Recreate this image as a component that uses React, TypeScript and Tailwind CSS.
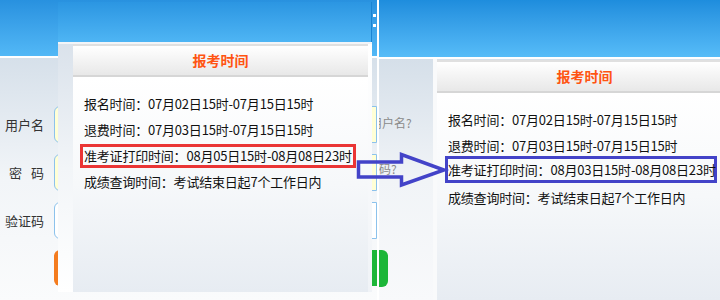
const rows = [
  "报名时间：07月02日15时-07月15日15时",
  "退费时间：07月03日15时-07月15日15时",
];

interface PanelProps {
  printTime: string;
  boxClass: string;
}

function SchedulePanel({ printTime, boxClass }: PanelProps) {
  return (
    <div className="flex h-full w-[295px] shrink-0 flex-col">
      {/* header */}
      <div className="flex h-[33px] shrink-0 items-center justify-center border-t-2 border-b-2 border-t-[#e0e0e0] border-b-[#d6d6d6] bg-gradient-to-b from-white to-[#e8e8e8]">
        <span className="text-[14px] font-bold text-[#ff5412]">报考时间</span>
      </div>
      {/* body */}
      <div className="flex flex-1 flex-col bg-gradient-to-b from-white via-[#f6f8fa] to-[#e7ecf2] pl-[11px] pt-[14px] text-[13px] tracking-[-0.2px] text-[#111]">
        {rows.map((r) => (
          <div key={r} className="flex h-[26px] items-center whitespace-nowrap">
            {r}
          </div>
        ))}
        <div className={`flex items-center whitespace-nowrap border-[3px] ${boxClass}`}>
          准考证打印时间：{printTime}
        </div>
        <div className="flex h-[26px] items-center whitespace-nowrap">
          成绩查询时间：考试结束日起7个工作日内
        </div>
      </div>
    </div>
  );
}

function LoginRow({ label, yellow }: { label: React.ReactNode; yellow: boolean }) {
  return (
    <div className="mb-[11px] flex h-[37px] items-center">
      <div className="w-[44px] text-right text-[13px] text-[#333]">{label}</div>
      <div
        className={`ml-[10px] h-[37px] w-[323px] rounded-l-[6px] border border-[#8cc2ec] ${
          yellow ? "bg-[#ffffd6]" : "bg-white"
        }`}
      />
    </div>
  );
}

export default function App() {
  return (
    <div className="relative h-[300px] w-[720px] overflow-hidden bg-white font-['Noto_Sans_CJK_SC',sans-serif]">
      {/* underlying login page */}
      <div className="flex h-[300px] flex-col">
        <div className="flex h-[56px] gap-[0px] bg-gradient-to-b from-[#2891df] to-[#52b8f6] pl-[373px] pt-[14px]">
          <div className="flex flex-col gap-[7px]">
            <div className="h-[3px] w-[3px] bg-white" />
            <div className="h-[3px] w-[3px] bg-white" />
          </div>
        </div>
        <div className="h-[2px] bg-white" />
        <div className="flex-1 bg-gradient-to-b from-[#d6e0ea] via-[#f2f5f8] to-[#fafbfc] pt-[48px]">
          <LoginRow label="用户名" yellow />
          <LoginRow
            label={
              <span>
                密<span className="ml-[9px]">码</span>
              </span>
            }
            yellow
          />
          <LoginRow label="验证码" yellow={false} />
          <div className="flex h-[36px]">
            <div className="ml-[54px] w-[140px] rounded-[6px] bg-[#f47c1f]" />
            <div className="ml-[56px] w-[138px] rounded-[6px] bg-[#1cb638]" />
          </div>
        </div>
      </div>

      {/* left screenshot: popup, printed 08月05日 */}
      <div className="absolute left-[58px] top-[2px] flex h-[290px] w-[314px] flex-col">
        <div className="h-[40px] shrink-0 border-r border-[#1a84d4] bg-gradient-to-b from-[#2b96e2] to-[#4eb5f4]" />
        <div className="h-[2px] shrink-0 bg-[#f3f5f8]" />
        <div className="flex flex-1">
          <div className="w-[15px] bg-gradient-to-b from-[#dae2eb] via-[#f2f5f8] to-white" />
          <div className="flex w-[299px] bg-gradient-to-b from-white to-[#f0f3f7]">
            <SchedulePanel
              printTime="08月05日15时-08月08日23时"
              boxClass="-ml-[4px] my-[1px] h-[24px] w-[276px] border-[#ea3535] pl-[1px]"
            />
          </div>
        </div>
      </div>

      {/* right screenshot: popup, printed 08月03日 */}
      <div className="absolute left-[377px] top-0 flex h-[300px] w-[343px] flex-col overflow-hidden border-l-2 border-white">
        <div className="h-[57px] shrink-0 bg-gradient-to-b from-[#1e8ddd] to-[#56bcf8]" />
        <div className="h-[2px] shrink-0 bg-white" />
        <div className="flex flex-1">
          <div className="flex w-[54px] shrink-0 flex-col overflow-hidden bg-gradient-to-b from-[#d5dfe9] via-[#f1f4f7] to-[#f8f9fb] text-[12px] leading-[14px] text-[#8a8a8a]">
            <div className="-ml-[9px] mt-[57px] whitespace-nowrap">用户名?</div>
            <div className="-ml-[12px] mt-[32px] whitespace-nowrap">密码?</div>
            <div className="mt-[74px] h-[37px] w-[9px] rounded-r-[6px] bg-[#1cb638]" />
          </div>
          <div className="w-[4px] shrink-0 bg-[#f9fafb]" />
          <div className="mt-[1px] flex">
            <SchedulePanel
              printTime="08月03日15时-08月08日23时"
              boxClass="-ml-[3px] -mt-[3px] mb-[2px] h-[27px] w-[272px] border-[#4343c8]"
            />
          </div>
        </div>
      </div>

      {/* annotation arrow */}
      <svg className="pointer-events-none absolute left-0 top-0" width="720" height="300">
        <polygon
          points="358.5,162 401.5,162 401.5,154.5 444,170 401.5,185 401.5,177 358.5,177"
          fill="none"
          stroke="#4343c8"
          strokeWidth="3.5"
          strokeLinejoin="miter"
        />
      </svg>
    </div>
  );
}
